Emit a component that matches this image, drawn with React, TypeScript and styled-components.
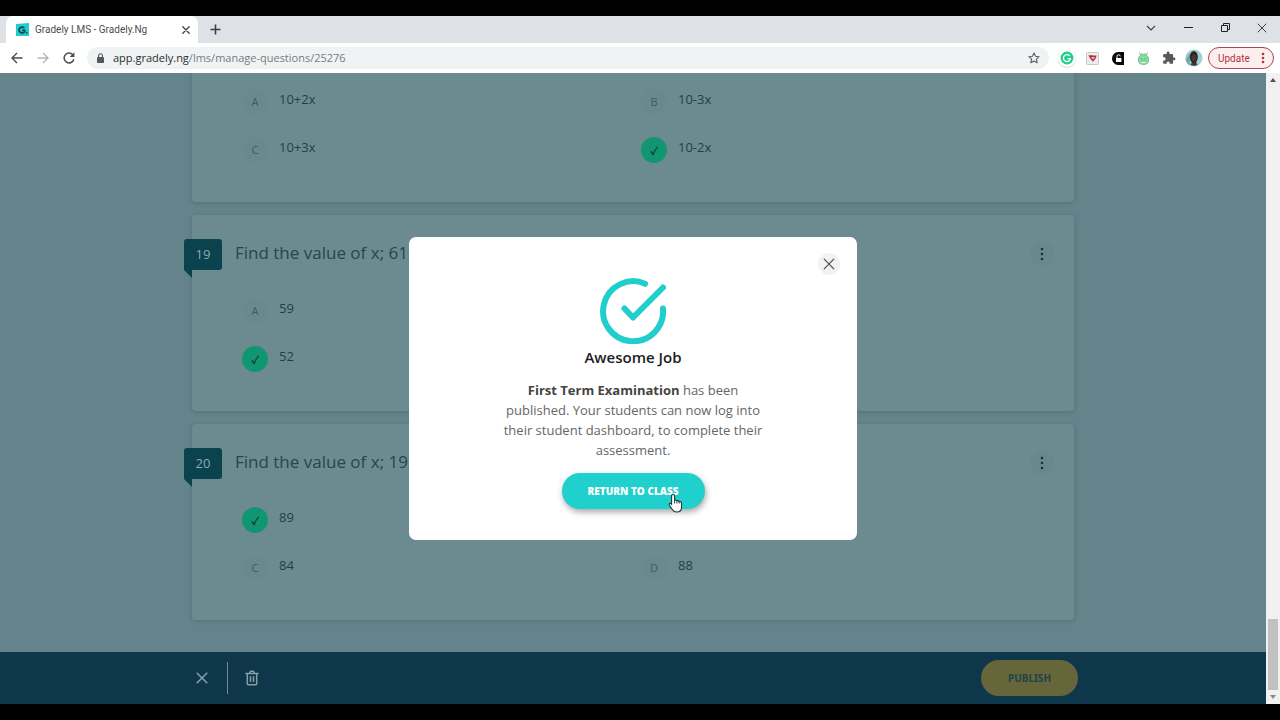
import React from "react";
import styled, { createGlobalStyle } from "styled-components";

const GlobalStyle = createGlobalStyle`
  * { box-sizing: border-box; }
  body { margin: 0; background: #000; font-family: "Open Sans", sans-serif; }
  button { font-family: inherit; padding: 0; border: 0; background: none; cursor: pointer; }
  svg { display: block; flex: none; }
`;

const Screen = styled.div`
  display: flex;
  flex-direction: column;
  height: 100vh;
  padding: 16px 0;
  background: #000;
`;

/* Browser window */

const Browser = styled.header`
  flex: none;
`;

const TabStrip = styled.div`
  display: flex;
  align-items: center;
  height: 27px;
  padding: 0 10px 0 6px;
  background: #dee1e5;
`;

const Tab = styled.div`
  display: flex;
  align-items: center;
  gap: 6px;
  width: 192px;
  height: 27px;
  padding: 0 8px 0 10px;
  border-radius: 7px 7px 0 0;
  background: #fff;
  color: #4a4d51;
  font-family: Roboto, sans-serif;
  font-size: 10px;
`;

const TabTitle = styled.span`
  flex: 1;
  white-space: nowrap;
`;

const ChromeButton = styled.button<{ $size?: number; $color?: string }>`
  display: flex;
  align-items: center;
  justify-content: center;
  flex: none;
  width: ${(p) => p.$size ?? 16}px;
  height: ${(p) => p.$size ?? 16}px;
  color: ${(p) => p.$color ?? "#3c4043"};
`;

const NewTab = styled(ChromeButton)`
  margin-left: 9px;
`;

const WindowButtons = styled.div`
  display: flex;
  gap: 21px;
  margin-left: auto;
  padding-bottom: 4px;
`;

const Toolbar = styled.div`
  display: flex;
  align-items: center;
  height: 30px;
  padding: 0 6px 0 9px;
  background: #fff;
`;

const NavButtons = styled.nav`
  display: flex;
  gap: 10px;
  margin-right: 10px;
`;

const AddressBar = styled.div`
  display: flex;
  align-items: center;
  flex: 1;
  gap: 8px;
  height: 22px;
  padding: 0 7px 0 9px;
  border-radius: 11px;
  background: #f0f3f3;
`;

const Address = styled.div`
  flex: 1;
  color: #777b7f;
  font-size: 11px;
  line-height: 16px;
`;

const Host = styled.span`
  color: #2b2e31;
`;

const Extensions = styled.div`
  display: flex;
  align-items: center;
  gap: 6px;
  margin: 0 5px 0 8px;
`;

const UpdateButton = styled.button`
  display: flex;
  align-items: center;
  justify-content: space-between;
  width: 66px;
  height: 22px;
  padding: 0 8px 0 9px;
  border: 1px solid #b3434c;
  border-radius: 11px;
  background: #fbeeee;
  color: #b5333d;
  font-family: Roboto, sans-serif;
  font-size: 10px;
`;

/* Page */

const Viewport = styled.div`
  display: flex;
  flex: 1;
  min-height: 0;
`;

const Page = styled.div`
  position: relative;
  display: flex;
  flex: 1;
  flex-direction: column;
  min-width: 0;
  background: #65838a;
`;

const Questions = styled.main`
  display: flex;
  flex: 1;
  flex-direction: column;
  justify-content: flex-end;
  gap: 13px;
  min-height: 0;
  padding: 0 192px 32px;
  overflow: hidden;
`;

const Card = styled.section`
  flex: none;
  padding: 24px 0 39px;
  border-radius: 4px;
  background: #6c8b91;
  box-shadow: 0 1px 4px rgba(40, 70, 80, 0.3);
`;

const CardHead = styled.div`
  display: flex;
  align-items: center;
  height: 31px;
  margin-bottom: 28px;
  padding-right: 20px;
`;

const NumberBadge = styled.span`
  position: relative;
  width: 38px;
  height: 31px;
  margin: 0 13px 0 -8px;
  border-radius: 3px 3px 3px 0;
  background: #0a424e;
  color: #8fabb0;
  font-size: 13px;
  line-height: 31px;
  text-align: center;

  &::after {
    content: "";
    position: absolute;
    top: 31px;
    left: 0;
    border-top: 8px solid #0a424e;
    border-left: 8px solid transparent;
  }
`;

const QuestionTitle = styled.h2`
  flex: 1;
  margin: 0;
  padding-bottom: 4px;
  color: #26454f;
  font-size: 17px;
  font-weight: 400;
  line-height: 24px;
`;

const MenuButton = styled.button`
  display: flex;
  align-items: center;
  justify-content: center;
  width: 24px;
  height: 24px;
  margin-bottom: 2px;
  border-radius: 50%;
  background: #69888e;
  color: #12303b;
`;

const Options = styled.ul`
  display: grid;
  grid-template-columns: 1fr 1fr;
  gap: 22px 0;
  margin: 0;
  padding: 0 34px 0 50px;
  list-style: none;
`;

const Option = styled.li<{ $column: number }>`
  display: flex;
  grid-column: ${(p) => p.$column};
  gap: 11px;
  height: 26px;
  color: #1f3f4a;
  font-size: 13px;
  line-height: 20px;
`;

const Marker = styled.span<{ $correct?: boolean }>`
  display: flex;
  align-items: center;
  justify-content: center;
  width: 26px;
  height: 26px;
  border-radius: 50%;
  background: ${(p) => (p.$correct ? "#109670" : "#6a898f")};
  color: ${(p) => (p.$correct ? "#0e4042" : "#3c5b64")};
  font-size: 11px;
`;

const ActionBar = styled.footer`
  display: flex;
  align-items: center;
  flex: none;
  height: 52px;
  padding: 0 188px 0 192px;
  background: #0e374b;
`;

const ActionButton = styled.button`
  display: flex;
  align-items: center;
  justify-content: center;
  width: 20px;
  height: 20px;
  color: #86a0a8;
`;

const Divider = styled.span`
  width: 1px;
  height: 32px;
  margin: 0 14px 0 15px;
  background: #6c8b96;
`;

const PublishButton = styled.button`
  width: 97px;
  height: 36px;
  margin-left: auto;
  border-radius: 18px;
  background: #67653a;
  color: #1c4547;
  font-family: "Noto Sans", sans-serif;
  font-size: 10px;
  font-weight: 700;
`;

/* Dialog */

const Backdrop = styled.div`
  position: absolute;
  inset: 0;
  display: flex;
  align-items: center;
  justify-content: center;
`;

const Dialog = styled.div`
  position: relative;
  display: flex;
  flex-direction: column;
  align-items: center;
  width: 448px;
  padding: 41px 0 31px;
  border-radius: 7px;
  background: #fff;
`;

const CloseButton = styled.button`
  position: absolute;
  top: 16px;
  right: 17px;
  display: flex;
  align-items: center;
  justify-content: center;
  width: 22px;
  height: 22px;
  border-radius: 50%;
  background: #f2f2f2;
  color: #4c4c4c;
`;

const DialogTitle = styled.h1`
  margin: 3px 0 13px;
  color: #1d1d1f;
  font-size: 15px;
  font-weight: 600;
  line-height: 20px;
`;

const Message = styled.p`
  width: 264px;
  margin: 0 0 13px;
  color: #666;
  font-size: 13px;
  line-height: 20px;
  text-align: center;

  strong {
    color: #444;
    font-weight: 700;
  }
`;

const ReturnButton = styled.button`
  position: relative;
  width: 143px;
  height: 36px;
  border-radius: 18px;
  background: #20d0cc;
  box-shadow: 1px 3px 6px rgba(0, 0, 0, 0.35);
  color: #fff;
  font-size: 10px;
  font-weight: 800;
`;

const Pointer = styled.svg`
  position: absolute;
  top: 20px;
  left: 106px;
`;

const ScrollTrack = styled.div`
  display: flex;
  flex-direction: column;
  align-items: center;
  width: 14px;
  padding: 5px 0;
  background: #f1f1f1;
`;

const ScrollThumb = styled.div`
  width: 10px;
  height: 71px;
  margin: auto 0 5px;
  background: #c1c1c1;
`;

const CrossIcon = ({ size, width = 1 }: { size: number; width?: number }) => (
  <svg width={size} height={size} viewBox="0 0 10 10" stroke="currentColor" strokeWidth={width} strokeLinecap="round">
    <path d="M1 1l8 8M9 1L1 9" />
  </svg>
);

const CheckIcon = () => (
  <svg width="9" height="11" viewBox="0 0 10 12" fill="none" stroke="currentColor" strokeLinecap="round" strokeLinejoin="round">
    <path d="M1.5 7.6L3.6 10.4" strokeWidth="1.8" />
    <path d="M3.6 10.400C4.700 6.800 6.200 4.400 8.300 2.200" strokeWidth="1.3" />
  </svg>
);

const DotsIcon = ({ gap }: { gap: number }) => (
  <svg width="4" height="14" viewBox="0 0 4 14" fill="currentColor">
    <circle cx="2" cy={7 - gap} r="1.3" />
    <circle cx="2" cy="7" r="1.3" />
    <circle cx="2" cy={7 + gap} r="1.3" />
  </svg>
);

type Answer = { letter: string; text: string; correct?: boolean };

type QuestionData = { number: number; title?: string; answers: Answer[] };

const QUESTIONS: QuestionData[] = [
  {
    number: 18,
    answers: [
      { letter: "A", text: "10+2x" },
      { letter: "B", text: "10-3x" },
      { letter: "C", text: "10+3x" },
      { letter: "D", text: "10-2x", correct: true },
    ],
  },
  {
    number: 19,
    title: "Find the value of x; 61x",
    answers: [
      { letter: "A", text: "59" },
      { letter: "C", text: "52", correct: true },
    ],
  },
  {
    number: 20,
    title: "Find the value of x; 19x",
    answers: [
      { letter: "A", text: "89", correct: true },
      { letter: "C", text: "84" },
      { letter: "D", text: "88" },
    ],
  },
];

const Question = ({ number, title, answers }: QuestionData) => (
  <Card>
    <CardHead>
      {title && (
        <>
          <NumberBadge>{number}</NumberBadge>
          <QuestionTitle>{title}</QuestionTitle>
          <MenuButton aria-label="Question menu">
            <DotsIcon gap={5} />
          </MenuButton>
        </>
      )}
    </CardHead>
    <Options>
      {answers.map((a) => (
        <Option key={a.letter} $column={a.letter === "A" || a.letter === "C" ? 1 : 2}>
          <Marker $correct={a.correct}>{a.correct ? <CheckIcon /> : a.letter}</Marker>
          {a.text}
        </Option>
      ))}
    </Options>
  </Card>
);

export default function App() {
  return (
    <Screen>
      <GlobalStyle />
      <Browser>
        <TabStrip>
          <Tab>
            <svg width="13" height="13" viewBox="0 0 13 13">
              <path d="M0 1L13 0v13H0z" fill="#20cdc9" />
              <path d="M8.3 5A3 3 0 1 0 8.6 8.7V7.4H6.2" fill="none" stroke="#0c4152" strokeWidth="1.7" />
              <circle cx="10.7" cy="9.8" r="0.9" fill="#0c4152" />
            </svg>
            <TabTitle>Gradely LMS - Gradely.Ng</TabTitle>
            <ChromeButton $size={9} aria-label="Close tab">
              <CrossIcon size={8} width={1.6} />
            </ChromeButton>
          </Tab>
          <NewTab aria-label="New tab">
            <svg width="11" height="11" viewBox="0 0 11 11" stroke="currentColor" strokeWidth="1.6">
              <path d="M5.5 0.5v10M0.5 5.5h10" />
            </svg>
          </NewTab>
          <WindowButtons>
            <ChromeButton aria-label="Search tabs">
              <svg width="10" height="6" viewBox="0 0 10 6" fill="none" stroke="currentColor" strokeWidth="1.1">
                <path d="M1 1l4 4 4-4" />
              </svg>
            </ChromeButton>
            <ChromeButton aria-label="Minimize">
              <svg width="9" height="9" viewBox="0 0 9 9" stroke="#222">
                <path d="M0 4.500h9" />
              </svg>
            </ChromeButton>
            <ChromeButton aria-label="Restore">
              <svg width="9" height="9" viewBox="0 0 9 9" fill="none" stroke="#222">
                <path d="M0.5 2.5h6v6h-6zM2.5 2.5v-2h6v6h-2" />
              </svg>
            </ChromeButton>
            <ChromeButton aria-label="Close">
              <CrossIcon size={10} />
            </ChromeButton>
          </WindowButtons>
        </TabStrip>
        <Toolbar>
          <NavButtons>
            <ChromeButton aria-label="Back" $color="#4a4d50">
              <svg width="12" height="12" viewBox="0 0 12 12" fill="none" stroke="currentColor" strokeWidth="1.4">
                <path d="M11.5 6H1M6 1L1 6l5 5" />
              </svg>
            </ChromeButton>
            <ChromeButton aria-label="Forward" $color="#b4b6b8">
              <svg width="12" height="12" viewBox="0 0 12 12" fill="none" stroke="currentColor" strokeWidth="1.4">
                <path d="M0.5 6H11M6 1l5 5-5 5" />
              </svg>
            </ChromeButton>
            <ChromeButton aria-label="Reload" $color="#4a4d50">
              <svg width="12" height="12" viewBox="0 0 12 12" fill="none" stroke="currentColor" strokeWidth="1.5">
                <path d="M10.1 3.2A4.9 4.9 0 1 0 10.8 7.2" />
                <path d="M11.4 0.3v4.8H6.6z" fill="currentColor" stroke="none" />
              </svg>
            </ChromeButton>
          </NavButtons>
          <AddressBar>
            <svg width="9" height="10" viewBox="0 0 9 10">
              <rect x="1" y="4" width="7" height="6" rx="0.8" fill="#55585b" />
              <path d="M2.6 4.2V2.7a1.9 1.9 0 0 1 3.8 0v1.5" fill="none" stroke="#55585b" strokeWidth="1.1" />
            </svg>
            <Address>
              <Host>app.gradely.ng</Host>/lms/manage-questions/25276
            </Address>
            <ChromeButton aria-label="Bookmark" $color="#5b5e61">
              <svg width="12" height="12" viewBox="0 0 12 12" fill="none" stroke="currentColor" strokeWidth="1.1" strokeLinejoin="round">
                <path d="M6 1l1.5 3.3 3.6.4-2.7 2.4.8 3.6L6 8.9l-3.2 1.8.8-3.6L.9 4.7l3.6-.4z" />
              </svg>
            </ChromeButton>
          </AddressBar>
          <Extensions>
            <ChromeButton $size={20} aria-label="Grammarly">
              <svg width="20" height="20" viewBox="0 0 20 20">
                <circle cx="10" cy="10.5" r="9.5" fill="#dfe1e2" />
                <circle cx="10" cy="9.8" r="9" fill="#fff" />
                <circle cx="10" cy="10" r="6.5" fill="#21cf8d" />
                <path d="M12.8 8A3.5 3.5 0 1 0 13.4 10.6H10.6" fill="none" stroke="#fff" strokeWidth="1.3" />
              </svg>
            </ChromeButton>
            <ChromeButton $size={19} aria-label="Video downloader">
              <svg width="13" height="13" viewBox="0 0 13 13">
                <rect x="0.5" y="0.5" width="12" height="12" rx="1" fill="#eeeded" stroke="#c8c8c8" />
                <path d="M2.5 3.5h8.2L9.500 6.800 7 9.800 4.500 7z" fill="#c42c3c" />
                <path d="M5 5h4L7 7.600z" fill="#fff" opacity="0.7" />
                <path d="M2.5 3.5h5l-3 1.500z" fill="#5a4448" />
              </svg>
            </ChromeButton>
            <ChromeButton $size={20} aria-label="Unlock">
              <svg width="12" height="13" viewBox="0 0 12 13">
                <path d="M6 0h6v13H6A6 6.5 0 0 1 6 0z" fill="#090909" />
                <rect x="4" y="6" width="5.4" height="4" fill="#fff" />
                <path d="M5 6V4.4a1.6 1.6 0 0 1 3.2 0" fill="none" stroke="#fff" />
              </svg>
            </ChromeButton>
            <ChromeButton $size={19} aria-label="Bug helper">
              <svg width="13" height="13" viewBox="0 0 13 13" fill="none" stroke="#79bd8e">
                <path d="M3.5 3L2.5 0.5M9.5 3l1-2.5M5 2.5V1M8 2.5V1" />
                <path d="M6.5 2.5c3 0 5.2 1.8 5.2 5.2S9.5 12.5 6.5 12.5 1.3 11 1.3 7.7s2.2-5.2 5.2-5.2z" fill="#89dda0" />
                <path d="M4 6.5h1.5v1.8H4zM7.5 6.5H9v1.8H7.5z" fill="#d3f7d9" />
                <path d="M4.5 10.5h4" stroke="#effff0" />
              </svg>
            </ChromeButton>
            <ChromeButton $size={20} aria-label="Extensions" $color="#56595c">
              <svg width="14" height="14" viewBox="0 0 24 24" fill="currentColor">
                <path d="M20.5 11H19V7a2 2 0 0 0-2-2h-4V3.500a2.500 2.500 0 0 0-5 0V5H4a2 2 0 0 0-2 2v3.800h1.500a2.700 2.700 0 0 1 0 5.400H2V20a2 2 0 0 0 2 2h3.800v-1.500a2.700 2.700 0 0 1 5.400 0V22H17a2 2 0 0 0 2-2v-4h1.500a2.500 2.500 0 0 0 0-5z" />
              </svg>
            </ChromeButton>
            <ChromeButton $size={18} aria-label="Profile">
              <svg width="18" height="18" viewBox="0 0 18 18">
                <circle cx="9" cy="9" r="8.500" fill="#a4ced0" />
                <path d="M0.600 10.500A8.500 8.500 0 0 0 5 16.500V4z" fill="#76a9ae" />
                <path d="M5.500 16c.6-1.500 1.200-2 1.500-3h4c.4 1 1 1.500 1.500 3a8.500 8.500 0 0 1-7 0z" fill="#343d39" />
                <ellipse cx="8.800" cy="8" rx="4" ry="6" fill="#2a2523" />
                <ellipse cx="8.800" cy="9" rx="2.300" ry="3.600" fill="#4a382f" />
              </svg>
            </ChromeButton>
          </Extensions>
          <UpdateButton>
            Update
            <DotsIcon gap={4} />
          </UpdateButton>
        </Toolbar>
      </Browser>

      <Viewport>
        <Page>
          <Questions>
            {QUESTIONS.map((q) => (
              <Question key={q.number} {...q} />
            ))}
          </Questions>
          <ActionBar>
            <ActionButton aria-label="Cancel">
              <CrossIcon size={12} width={1.3} />
            </ActionButton>
            <Divider />
            <ActionButton aria-label="Delete">
              <svg width="14" height="16" viewBox="0 0 14 16" fill="none" stroke="currentColor" strokeWidth="1.5" strokeLinejoin="round" strokeLinecap="round">
                <path d="M1 3.500h12M4.500 3.500L5.500 1.200h3L9.500 3.500M2.300 3.500v10.300a1 1 0 0 0 1 1h7.400a1 1 0 0 0 1-1V3.500M5.500 6.800v4.700M8.500 6.800v4.700" />
              </svg>
            </ActionButton>
            <PublishButton>PUBLISH</PublishButton>
          </ActionBar>
          <Backdrop>
            <Dialog role="dialog" aria-labelledby="dialog-title">
              <CloseButton aria-label="Close dialog">
                <CrossIcon size={12} />
              </CloseButton>
              <svg width="66" height="66" viewBox="0 0 66 66" fill="none" stroke="#20cfcb" strokeWidth="6" strokeLinecap="round" strokeLinejoin="round">
                <path d="M45 5.700A30 30 0 1 0 63 30.500" />
                <path d="M24.500 30.500L33 39.500 63 9.500" />
              </svg>
              <DialogTitle id="dialog-title">Awesome Job</DialogTitle>
              <Message>
                <strong>First Term Examination</strong> has been published. Your students can now log into their student
                dashboard, to complete their assessment.
              </Message>
              <ReturnButton>
                RETURN TO CLASS
                <Pointer width="16" height="20" viewBox="0 0 16 20">
                  <path
                    d="M5 1.500c1 0 1.600.7 1.600 1.600v4.100c1-.5 1.900-.2 2.300.6 1-.4 1.800 0 2.200.8 1.300-.4 2.400.3 2.400 1.600v4.200c0 3-1.700 4.600-4.700 4.600-2.200 0-3.300-.6-4.300-2.300L1.300 12c-.6-1.200.5-2.200 1.500-1.500l.8.800V3.100c0-.9.5-1.600 1.400-1.600z"
                    fill="#fff"
                    stroke="#233"
                    strokeWidth="1.100"
                  />
                  <path d="M6.600 7v3.500M8.900 8v2.500M11.100 8.600v2" stroke="#233" strokeWidth="0.900" />
                </Pointer>
              </ReturnButton>
            </Dialog>
          </Backdrop>
        </Page>
        <ScrollTrack>
          <svg width="6" height="4" viewBox="0 0 6 4">
            <path d="M0 4l3-4 3 4z" fill="#505050" />
          </svg>
          <ScrollThumb />
          <svg width="6" height="4" viewBox="0 0 6 4">
            <path d="M0 0l3 4 3-4z" fill="#8a8a8a" />
          </svg>
        </ScrollTrack>
      </Viewport>
    </Screen>
  );
}
